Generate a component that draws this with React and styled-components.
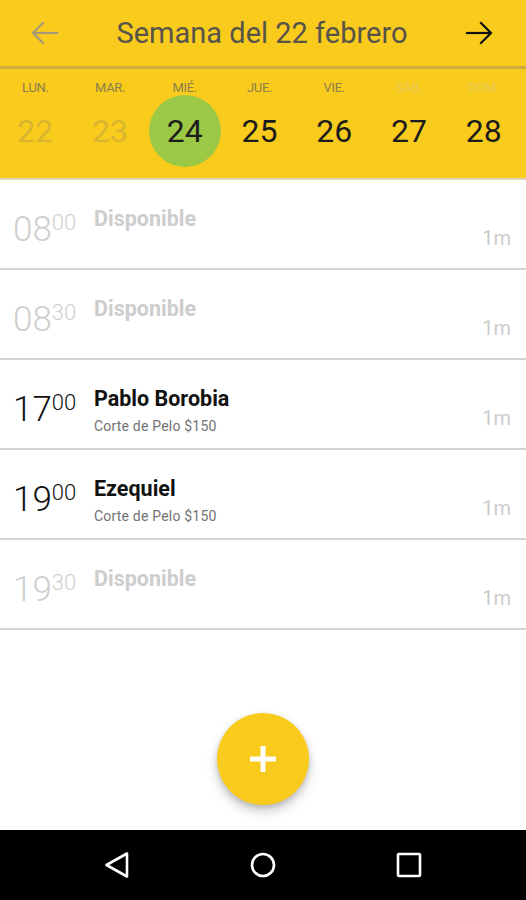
import React from 'react'
import styled, { createGlobalStyle } from 'styled-components'

const GlobalStyle = createGlobalStyle`
  html, body {
    margin: 0;
    padding: 0;
    background: #ffffff;
    font-family: Roboto, "Liberation Sans", sans-serif;
  }
`;

const Screen = styled.div`
  width: 526px;
  height: 900px;
  display: flex;
  flex-direction: column;
  background: #ffffff;
  overflow: hidden;
`;

const Header = styled.div`
  background: #f8cb1d;
  border-bottom: 2px solid #ddd6bc;
`;

const TitleBar = styled.div`
  height: 66px;
  display: flex;
  align-items: center;
  justify-content: space-between;
  padding: 0 32px 0 30px;
`;

const Title = styled.div`
  font-size: 29px;
  color: #57544a;
`;

const ArrowButton = styled.div`
  width: 30px;
  height: 30px;
  display: flex;
  align-items: center;
  justify-content: center;
  color: ${p => (p.$muted ? '#a59a78' : '#111111')};
`;

const Divider = styled.div`
  height: 3px;
  background: #cfac3c;
`;

const DaysGrid = styled.div`
  display: grid;
  grid-template-columns: repeat(7, 1fr);
  height: 109px;
  margin: 0 5px 0 -2px;
`;

const DayCell = styled.div`
  display: flex;
  flex-direction: column;
  align-items: center;
  padding-top: 11px;
`;

const DayLabel = styled.div`
  font-size: 13px;
  height: 16px;
  line-height: 16px;
  color: ${p => (p.$weekend ? '#eccd5a' : '#8c7e4c')};
  letter-spacing: -0.3px;
`;

const DayNumber = styled.div`
  margin-top: -1px;
  width: 72px;
  height: 72px;
  border-radius: 50%;
  display: flex;
  align-items: center;
  justify-content: center;
  font-size: 32px;
  background: ${p => (p.$active ? '#9bc845' : 'transparent')};
  color: ${p => (p.$past ? '#d9b530' : '#1c1c1c')};
`;

const List = styled.div`
  display: flex;
  flex-direction: column;
`;

const Row = styled.div`
  height: 88px;
  border-bottom: 2px solid #d4d4d4;
  display: flex;
  align-items: flex-start;
  padding: 0 15px 0 13px;
`;

const Time = styled.div`
  width: 81px;
  margin-top: 30px;
  font-size: 35px;
  font-weight: 300;
  line-height: 40px;
  color: ${p => (p.$free ? '#cfcfcf' : '#111111')};
  white-space: nowrap;
`;

const Minutes = styled.span`
  font-size: 22px;
  vertical-align: top;
  line-height: 24px;
  position: relative;
  top: 1px;
`;

const Info = styled.div`
  flex: 1;
  margin-top: 27px;
  display: flex;
  flex-direction: column;
`;

const Name = styled.div`
  font-size: 21.5px;
  font-weight: 700;
  line-height: 24px;
  color: ${p => (p.$free ? '#cdcdcd' : '#111111')};
`;

const Service = styled.div`
  margin-top: 7px;
  font-size: 14px;
  letter-spacing: 0.2px;
  color: #727272;
`;

const Duration = styled.div`
  align-self: flex-end;
  margin-bottom: 18px;
  font-size: 20px;
  color: #cccccc;
`;

const FabArea = styled.div`
  flex: 1;
  display: flex;
  align-items: flex-end;
  justify-content: center;
  padding-bottom: 25px;
`;

const Fab = styled.div`
  width: 92px;
  height: 92px;
  border-radius: 50%;
  background: #f8cb1d;
  display: flex;
  align-items: center;
  justify-content: center;
  box-shadow: 0 6px 12px rgba(0, 0, 0, 0.22), 0 2px 4px rgba(0, 0, 0, 0.12);
`;

const NavBar = styled.div`
  height: 70px;
  background: #000000;
  display: flex;
  align-items: center;
  justify-content: center;
  gap: 106px;
`;

const NavIcon = styled.div`
  width: 40px;
  height: 40px;
  display: flex;
  align-items: center;
  justify-content: center;
`;

const days = [
  { label: 'LUN.', num: 22, past: true },
  { label: 'MAR.', num: 23, past: true },
  { label: 'MIÉ.', num: 24, active: true },
  { label: 'JUE.', num: 25 },
  { label: 'VIE.', num: 26 },
  { label: 'SÁB.', num: 27, weekend: true },
  { label: 'DOM.', num: 28, weekend: true },
];

const slots = [
  { h: '08', m: '00', free: true },
  { h: '08', m: '30', free: true },
  { h: '17', m: '00', name: 'Pablo Borobia', service: 'Corte de Pelo $150' },
  { h: '19', m: '00', name: 'Ezequiel', service: 'Corte de Pelo $150' },
  { h: '19', m: '30', free: true },
];

function Arrow({ left }) {
  return (
    <svg width="28" height="24" viewBox="0 0 28 24" fill="none" stroke="currentColor"
      strokeWidth="2.2" strokeLinecap="square" strokeLinejoin="miter">
      {left ? (
        <>
          <path d="M26 12H3" />
          <path d="M12 2L2 12l10 10" />
        </>
      ) : (
        <>
          <path d="M2 12h23" />
          <path d="M16 2l10 10-10 10" />
        </>
      )}
    </svg>
  )
}

export default function App() {
  return (
    <>
      <GlobalStyle />
      <Screen>
        <Header>
          <TitleBar>
            <ArrowButton $muted><Arrow left /></ArrowButton>
            <Title>Semana del 22 febrero</Title>
            <ArrowButton><Arrow /></ArrowButton>
          </TitleBar>
          <Divider />
          <DaysGrid>
            {days.map(d => (
              <DayCell key={d.num}>
                <DayLabel $weekend={d.weekend}>{d.label}</DayLabel>
                <DayNumber $active={d.active} $past={d.past}>{d.num}</DayNumber>
              </DayCell>
            ))}
          </DaysGrid>
        </Header>

        <List>
          {slots.map((s, i) => (
            <Row key={i}>
              <Time $free={s.free}>{s.h}<Minutes>{s.m}</Minutes></Time>
              <Info>
                <Name $free={s.free}>{s.free ? 'Disponible' : s.name}</Name>
                {s.service && <Service>{s.service}</Service>}
              </Info>
              <Duration>1m</Duration>
            </Row>
          ))}
        </List>

        <FabArea>
          <Fab>
            <svg width="32" height="32" viewBox="0 0 32 32">
              <path d="M16 3v26M3 16h26" stroke="#ffffff" strokeWidth="5" />
            </svg>
          </Fab>
        </FabArea>

        <NavBar>
          <NavIcon>
            <svg width="28" height="28" viewBox="0 0 28 28" fill="none" stroke="#ffffff" strokeWidth="2.6" strokeLinejoin="round">
              <path d="M24 2.5v23L3.5 14z" />
            </svg>
          </NavIcon>
          <NavIcon>
            <svg width="28" height="28" viewBox="0 0 28 28" fill="none" stroke="#ffffff" strokeWidth="2.6">
              <circle cx="14" cy="14" r="11" />
            </svg>
          </NavIcon>
          <NavIcon>
            <svg width="28" height="28" viewBox="0 0 28 28" fill="none" stroke="#ffffff" strokeWidth="2.6">
              <rect x="3" y="3" width="22" height="22" rx="1" />
            </svg>
          </NavIcon>
        </NavBar>
      </Screen>
    </>
  )
}
